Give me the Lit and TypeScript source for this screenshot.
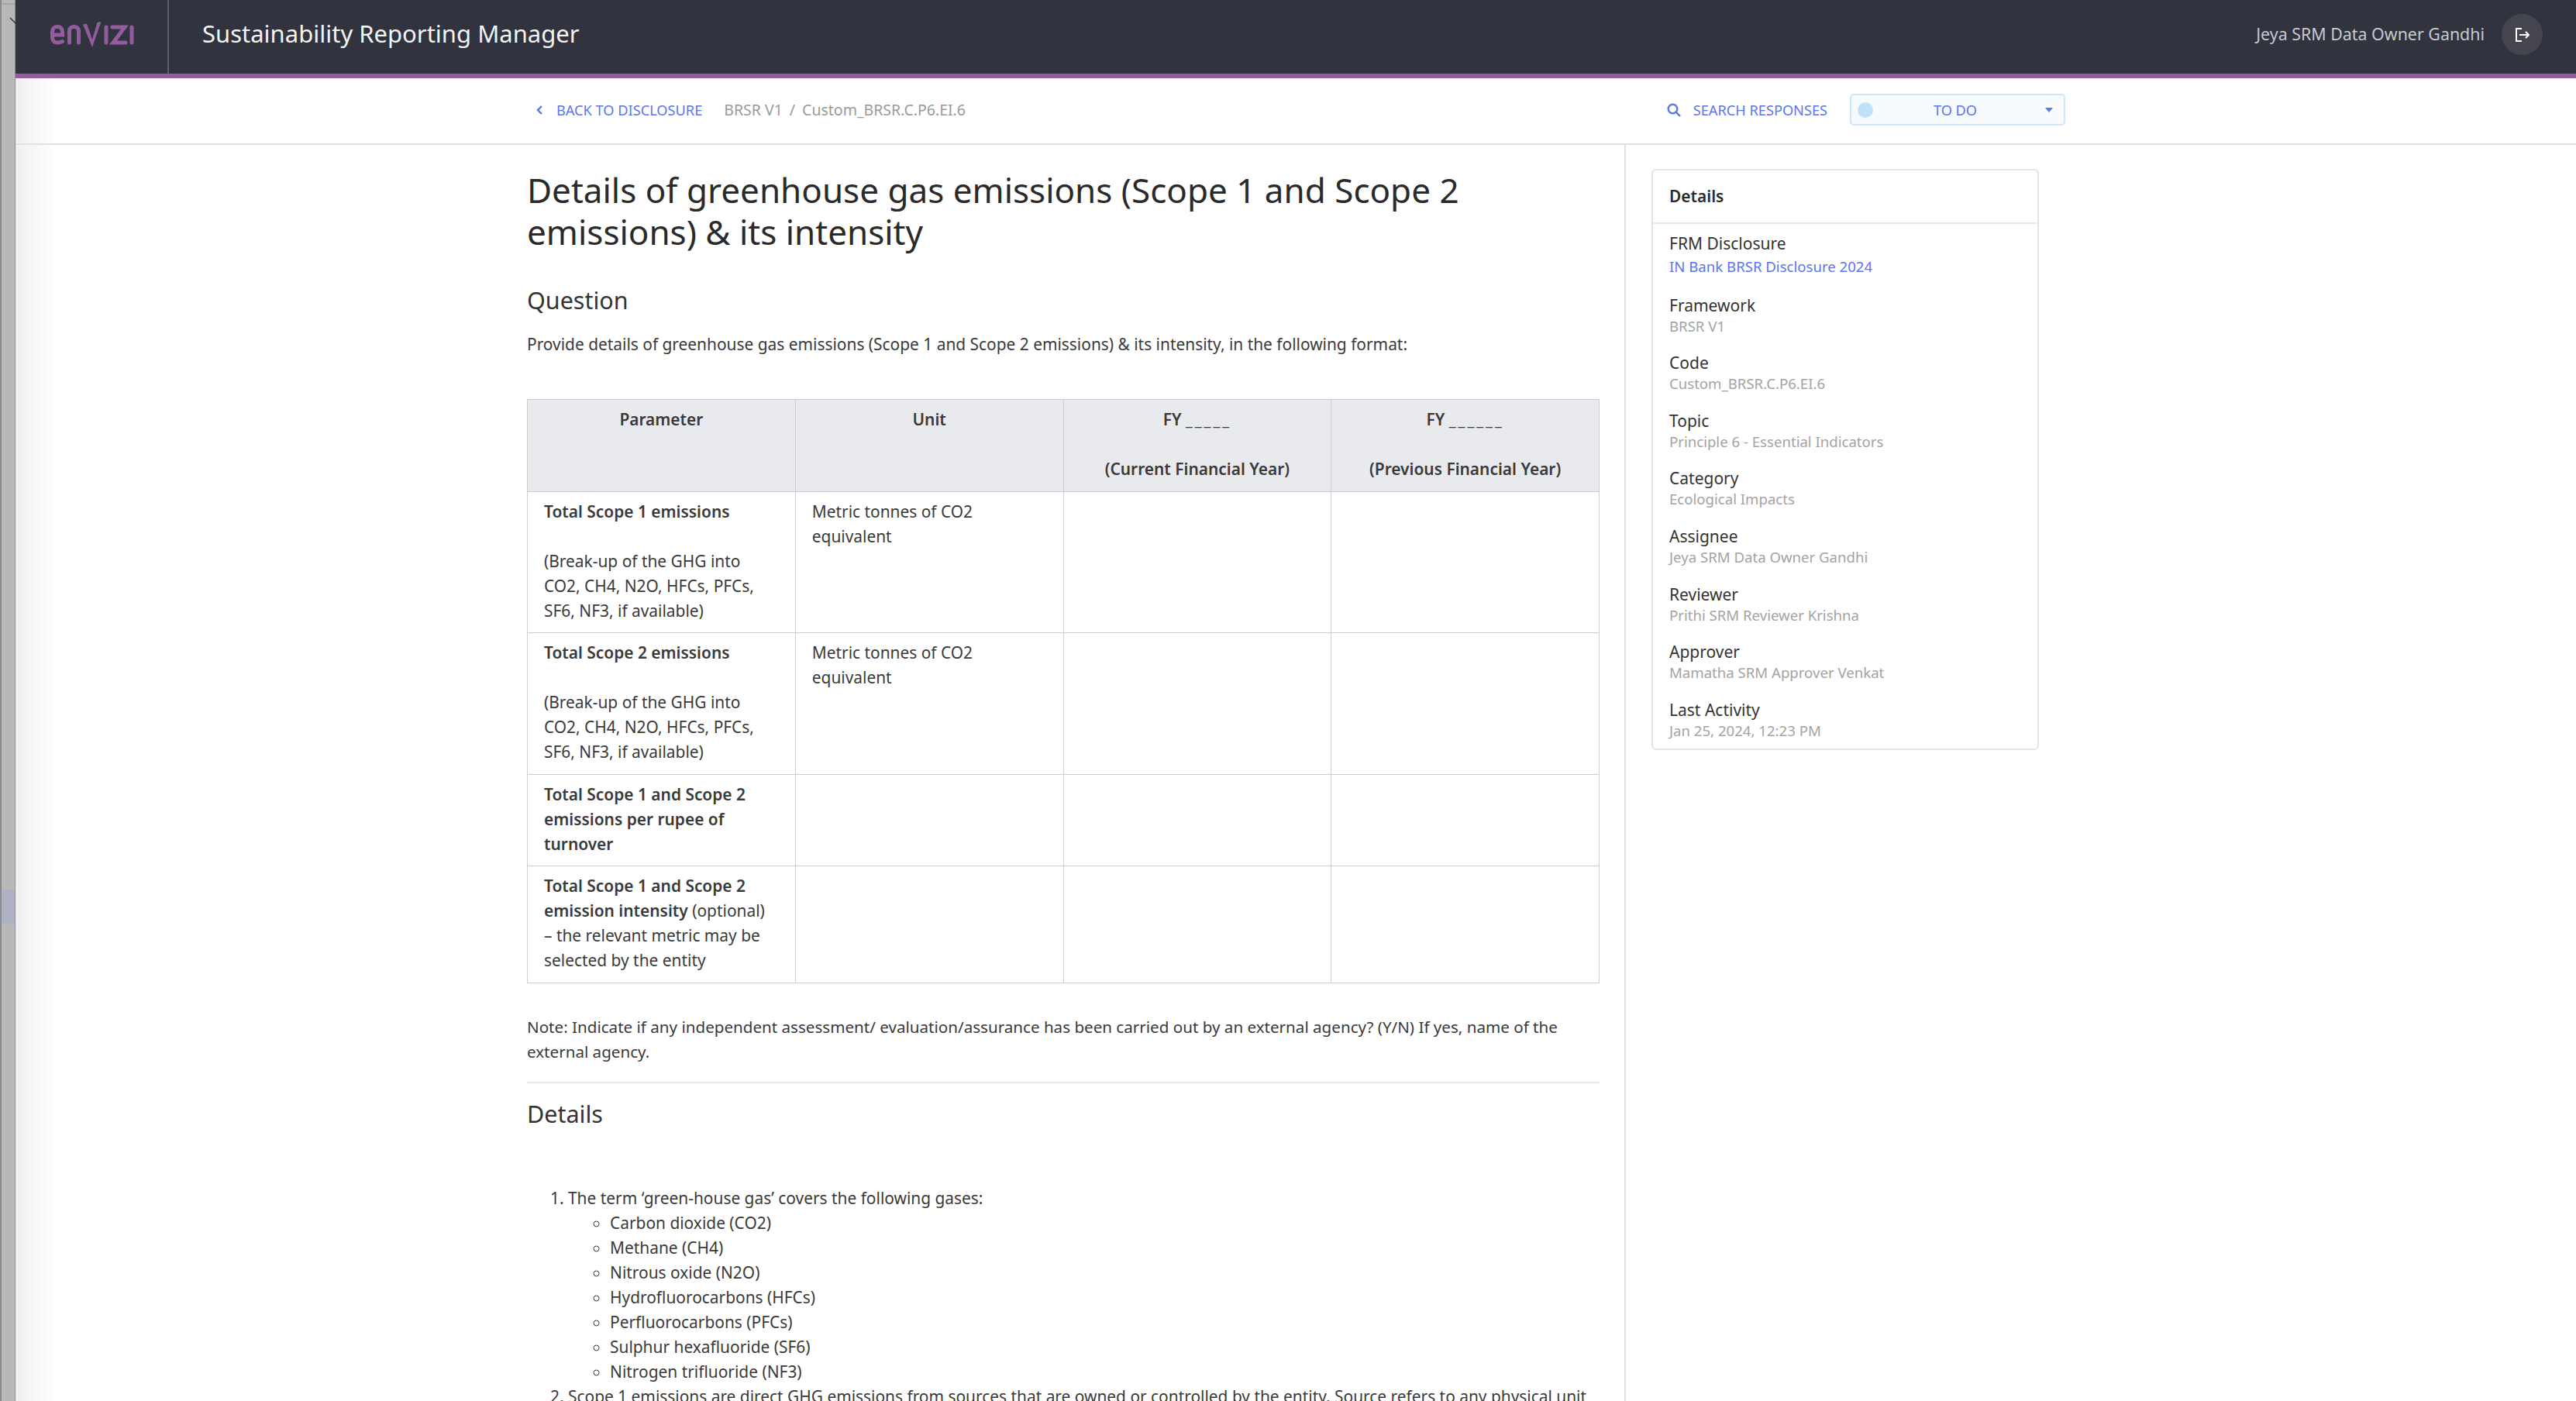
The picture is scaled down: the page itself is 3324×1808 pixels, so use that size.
import { LitElement, html, css } from 'lit';
import { customElement } from 'lit/decorators.js';

const DETAILS = [
  ['Framework', 'BRSR V1'],
  ['Code', 'Custom_BRSR.C.P6.EI.6'],
  ['Topic', 'Principle 6 - Essential Indicators'],
  ['Category', 'Ecological Impacts'],
  ['Assignee', 'Jeya SRM Data Owner Gandhi'],
  ['Reviewer', 'Prithi SRM Reviewer Krishna'],
  ['Approver', 'Mamatha SRM Approver Venkat'],
  ['Last Activity', 'Jan 25, 2024, 12:23 PM'],
];

const GASES = [
  'Carbon dioxide (CO2)',
  'Methane (CH4)',
  'Nitrous oxide (N2O)',
  'Hydrofluorocarbons (HFCs)',
  'Perfluorocarbons (PFCs)',
  'Sulphur hexafluoride (SF6)',
  'Nitrogen trifluoride (NF3)',
];

@customElement('app-root')
export class AppRoot extends LitElement {
  static styles = css`
    :host {
      display: flex;
      height: 1808px;
      overflow: hidden;
      font-family: 'Noto Sans', sans-serif;
      font-size: 20.9px;
      line-height: 32px;
      color: #3a3a3a;
      background: #fff;
    }
    .strip {
      flex: none;
      width: 20px;
      box-sizing: border-box;
      border-left: 2px solid #8a8a8a;
      border-right: 1px solid #8f8f8f;
      background: #b8b8b8;
      position: relative;
    }
    .strip .mark {
      position: absolute;
      left: 0;
      right: 0;
      top: 1148px;
      height: 44px;
      background: #aeb1c2;
    }
    .strip .top {
      position: absolute;
      left: 0;
      right: 0;
      top: 4px;
      height: 2px;
      background: #a5a5a5;
    }
    .strip svg {
      position: absolute;
      left: 10px;
      top: 22px;
    }
    .page {
      flex: 1;
      min-width: 0;
      display: flex;
      flex-direction: column;
      background: linear-gradient(90deg, #efefef 0, #fff 50px);
    }
    header {
      flex: none;
      height: 95px;
      border-bottom: 6px solid #945c9f;
      background: #31333f;
      display: flex;
      align-items: center;
    }
    .logo {
      width: 198px;
      align-self: stretch;
      flex: none;
      box-sizing: border-box;
      border-right: 2px solid #5c5e68;
      padding: 28px 0 0 45px;
    }
    .logo svg { display: block; }
    .title {
      margin: 0 0 9px 43px;
      font-size: 31px;
      color: #f4f4f4;
      flex: 1;
    }
    .user {
      margin-bottom: 7px;
      font-size: 21.4px;
      color: #c9c9cc;
    }
    .logout {
      width: 53px;
      height: 53px;
      border-radius: 50%;
      background: #44454f;
      margin: 0 43px 6px 22px;
      display: flex;
      align-items: center;
      justify-content: center;
    }
    .sub {
      flex: none;
      height: 81px;
      border-bottom: 2px solid #e2e2e2;
      display: flex;
      align-items: center;
      padding: 0 0 3px 670px;
      font-size: 18.2px;
    }
    .link {
      color: #5b76ef;
      display: flex;
      align-items: center;
      gap: 16px;
    }
    .crumbs {
      color: #9a9a9a;
      margin-left: 28px;
      flex: 1;
      font-size: 19.5px;
    }
    .crumbs i { font-style: normal; margin: 0 9px; }
    .status {
      width: 278px;
      height: 41px;
      margin: 0 659px 0 29px;
      box-sizing: border-box;
      border: 2px solid #cfe6fa;
      border-radius: 5px;
      background: #f8fbfe;
      color: #5b76ef;
      display: flex;
      align-items: center;
      padding: 0 14px 0 8px;
    }
    .dot {
      width: 20px;
      height: 20px;
      border-radius: 50%;
      background: #bfe2fb;
    }
    .status b { flex: 1; text-align: center; font-weight: 400; padding-right: 10px; }
    .caret {
      width: 0;
      height: 0;
      border: 5px solid transparent;
      border-top: 6px solid #5b76ef;
      border-bottom: 0;
    }
    .body {
      flex: 1;
      min-height: 0;
      display: flex;
    }
    main {
      flex: none;
      width: 2078px;
      box-sizing: border-box;
      padding: 31px 32px 0 660px;
      border-right: 2px solid #e2e2e2;
    }
    h1 {
      margin: 0;
      font-size: 44px;
      font-weight: 400;
      line-height: 54px;
      color: #2a2a2a;
    }
    h2 {
      margin: 0;
      font-size: 30.5px;
      font-weight: 400;
      line-height: 40px;
      color: #333;
    }
    .question { margin-top: 41px; }
    p { margin: 0; }
    .intro { margin-top: 21px; }
    table {
      margin-top: 55px;
      width: 100%;
      table-layout: fixed;
      border-collapse: collapse;
    }
    th, td {
      border: 1px solid #cfcfd2;
      padding: 9.25px 21px 12.25px;
      vertical-align: top;
      text-align: left;
      font-weight: 400;
    }
    th {
      background: #e9eaee;
      text-align: center;
      font-weight: 600;
    }
    td b { font-weight: 600; }
    .blank { letter-spacing: 3px; }
    .gap { height: 32px; }
    .note {
      margin-top: 40px;
      padding-bottom: 23px;
      border-bottom: 2px solid #e8e8e8;
      font-size: 20.6px;
    }
    .details-head { margin-top: 19px; }
    ol { margin: 73px 0 0; padding-left: 53px; }
    ul { margin: 0; padding-left: 54px; list-style: circle; }
    aside {
      flex: none;
      width: 500px;
      height: 750px;
      margin: 31px 0 0 33px;
      box-sizing: border-box;
      border: 2px solid #e4e4e4;
      border-radius: 6px;
    }
    .card-head {
      height: 69px;
      padding: 0 0 2px 21px;
      box-sizing: border-box;
      display: flex;
      align-items: center;
      font-weight: 600;
      border-bottom: 2px solid #e8e8e8;
      color: #2a2a2a;
    }
    .list { padding: 11px 21px 0; display: flex; flex-direction: column; gap: 21.6px; }
    .item span { display: block; font-size: 21px; line-height: 28px; color: #333; }
    .item small {
      display: block;
      font-size: 18.6px;
      line-height: 25px;
      color: #a3a3a3;
    }
    .item small.blue { color: #5b76ef; line-height: 28px; padding-top: 2px; }
  `;

  render() {
    return html`
      <div class="strip">
        <div class="top"></div>
        <svg width="10" height="10" viewBox="0 0 10 10" fill="none" stroke="#333" stroke-width="1.4"><path d="M1 1l7 7" /></svg>
        <div class="mark"></div>
      </div>
      <div class="page">
        <header>
          <div class="logo">
            <svg width="108" height="34" viewBox="0 0 108 34" fill="none" stroke="#945c9f" stroke-width="5" stroke-linecap="round" aria-label="envizi">
              <path d="M2.5 17H15.5V13C15.5 9 13 6.5 9 6.5S2.5 9 2.5 13V20C2.5 24.5 5 27 9 27C11.5 27 13.5 26.5 15.5 25.5" />
              <path d="M24.5 27V12C24.5 8.5 27 6.5 30.5 6.5S36.5 8.5 36.5 12V27" />
              <path d="M42 3.5 47 2.5 54 23 60.5 1 65.5 0 54 33Z" fill="#945c9f" stroke="none" />
              <path d="M72 7V27M80 7H96L81 27H97M105 7V27" />
            </svg>
          </div>
          <div class="title">Sustainability Reporting Manager</div>
          <div class="user">Jeya SRM Data Owner Gandhi</div>
          <div class="logout">
            <svg width="20" height="20" viewBox="0 0 20 20" fill="none" stroke="#fff" stroke-width="2">
              <path d="M9 2H2v16h7M6 10h12M14 6l4 4-4 4" />
            </svg>
          </div>
        </header>
        <div class="sub">
          <div class="link">
            <svg width="12" height="16" viewBox="0 0 12 16" fill="none" stroke="#5b76ef" stroke-width="2.4">
              <path d="M9 3L4 8l5 5" />
            </svg>
            BACK TO DISCLOSURE
          </div>
          <div class="crumbs">BRSR V1<i>/</i>Custom_BRSR.C.P6.EI.6</div>
          <div class="link">
            <svg width="18" height="18" viewBox="0 0 18 18" fill="none" stroke="#5b76ef" stroke-width="2.4">
              <circle cx="7.5" cy="7.5" r="5.8" /><path d="M11.5 11.5L17 17" />
            </svg>
            SEARCH RESPONSES
          </div>
          <div class="status"><div class="dot"></div><b>TO DO</b><div class="caret"></div></div>
        </div>
        <div class="body">
          <main>
            <h1>Details of greenhouse gas emissions (Scope 1 and Scope 2 emissions) &amp; its intensity</h1>
            <h2 class="question">Question</h2>
            <p class="intro">Provide details of greenhouse gas emissions (Scope 1 and Scope 2 emissions) &amp; its intensity, in the following format:</p>
            <table>
              <tr>
                <th>Parameter</th>
                <th>Unit</th>
                <th>FY <span class="blank">_____</span><div class="gap"></div>(Current Financial Year)</th>
                <th>FY <span class="blank">______</span><div class="gap"></div>(Previous Financial Year)</th>
              </tr>
              <tr>
                <td><b>Total Scope 1 emissions</b><div class="gap"></div>(Break-up of the GHG into CO2, CH4, N2O, HFCs, PFCs, SF6, NF3, if available)</td>
                <td>Metric tonnes of CO2 equivalent</td>
                <td></td>
                <td></td>
              </tr>
              <tr>
                <td><b>Total Scope 2 emissions</b><div class="gap"></div>(Break-up of the GHG into CO2, CH4, N2O, HFCs, PFCs, SF6, NF3, if available)</td>
                <td>Metric tonnes of CO2 equivalent</td>
                <td></td>
                <td></td>
              </tr>
              <tr>
                <td><b>Total Scope 1 and Scope 2 emissions per rupee of turnover</b></td>
                <td></td>
                <td></td>
                <td></td>
              </tr>
              <tr>
                <td><b>Total Scope 1 and Scope 2 emission intensity</b> (optional)<br />– the relevant metric may be selected by the entity</td>
                <td></td>
                <td></td>
                <td></td>
              </tr>
            </table>
            <p class="note">Note: Indicate if any independent assessment/ evaluation/assurance has been carried out by an external agency? (Y/N) If yes, name of the external agency.</p>
            <h2 class="details-head">Details</h2>
            <ol>
              <li>The term ‘green-house gas’ covers the following gases:
                <ul>${GASES.map((g) => html`<li>${g}</li>`)}</ul>
              </li>
              <li>Scope 1 emissions are direct GHG emissions from sources that are owned or controlled by the entity. Source refers to any physical unit or process that releases a GHG into the atmosphere.</li>
            </ol>
          </main>
          <aside>
            <div class="card-head">Details</div>
            <div class="list">
              <div class="item"><span>FRM Disclosure</span><small class="blue">IN Bank BRSR Disclosure 2024</small></div>
              ${DETAILS.map(([label, value]) => html`<div class="item"><span>${label}</span><small>${value}</small></div>`)}
            </div>
          </aside>
        </div>
      </div>
    `;
  }
}
